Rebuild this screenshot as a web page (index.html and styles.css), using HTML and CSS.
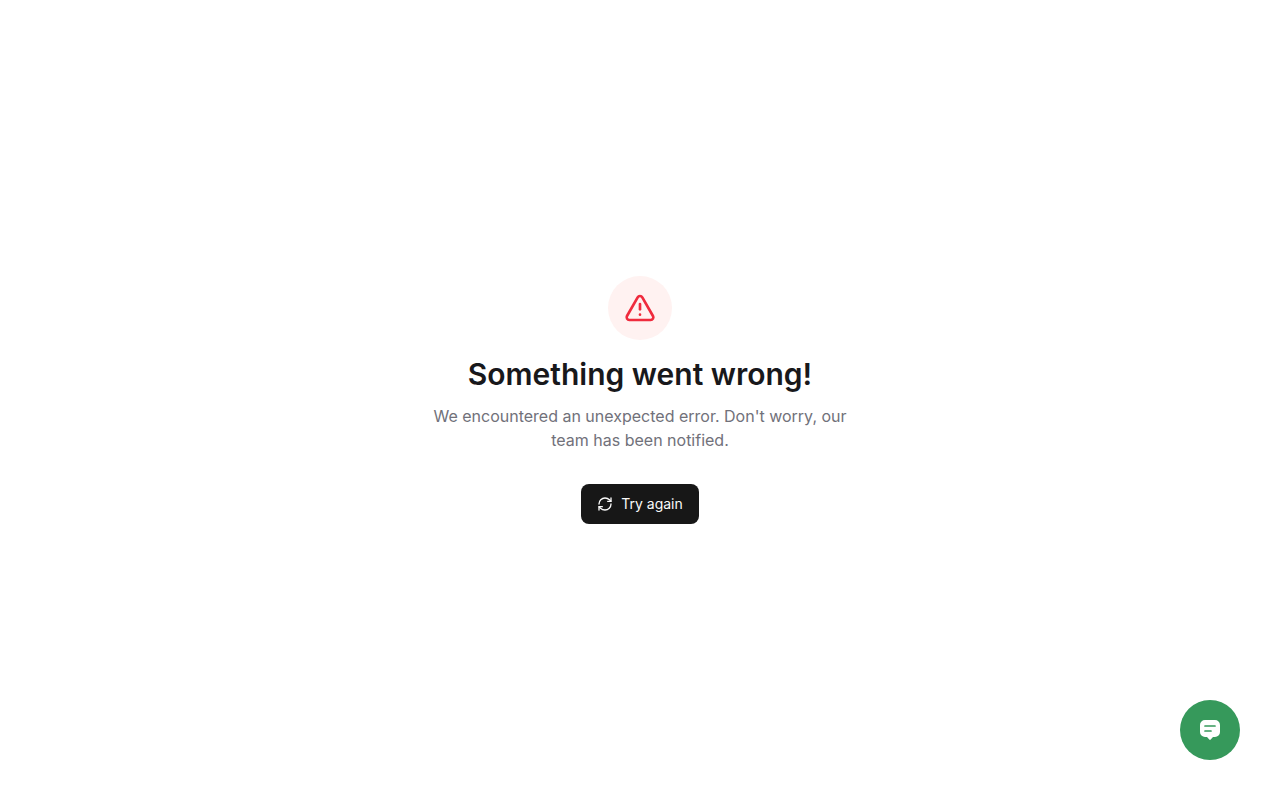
FILE: index.html
```html
<!DOCTYPE html>
<html lang="en">

<head>
    <meta charset="UTF-8">
    <meta name="viewport" content="width=device-width, initial-scale=1.0">
    <title>Something went wrong!</title>
    <link rel="stylesheet" href="styles.css">
</head>

<body>
    <main class="error-page">
        <div class="error-content">
            <div class="error-icon">
                <svg width="32" height="32" viewBox="0 0 24 24" fill="none" stroke="currentColor" stroke-width="2" stroke-linecap="round" stroke-linejoin="round" aria-hidden="true">
                    <path d="m21.73 18-8-14a2 2 0 0 0-3.48 0l-8 14A2 2 0 0 0 4 21h16a2 2 0 0 0 1.73-3" />
                    <path d="M12 9v4" />
                    <path d="M12 17h.01" />
                </svg>
            </div>
            <h1>Something went wrong!</h1>
            <p class="message">We encountered an unexpected error. Don't worry, our team has been notified.</p>
            <button type="button" class="btn" id="retry">
                <svg width="16" height="16" viewBox="0 0 24 24" fill="none" stroke="currentColor" stroke-width="2" stroke-linecap="round" stroke-linejoin="round" aria-hidden="true">
                    <path d="M3 12a9 9 0 0 1 9-9 9.75 9.75 0 0 1 6.74 2.74L21 8" />
                    <path d="M21 3v5h-5" />
                    <path d="M21 12a9 9 0 0 1-9 9 9.75 9.75 0 0 1-6.74-2.74L3 16" />
                    <path d="M8 16H3v5" />
                </svg>
                Try again
            </button>
        </div>
    </main>

    <button type="button" class="chat-button" aria-label="Open chat">
        <svg width="20" height="20" viewBox="0 0 20 20" aria-hidden="true">
            <path fill="#fff" d="M5 0h10a5 5 0 0 1 5 5v7a5 5 0 0 1-5 5h-2l-2.3 2.6a1 1 0 0 1-1.4 0L7 17H5a5 5 0 0 1-5-5V5a5 5 0 0 1 5-5z" />
            <path fill="none" stroke="#36995b" stroke-width="1.7" stroke-linecap="round" d="M5 6h10M5 11h6" />
        </svg>
    </button>

    <script>
        document.getElementById('retry').addEventListener('click', () => location.reload());
    </script>
</body>

</html>
```

FILE: styles.css
```css
body {
    font-family: Inter, sans-serif;
    background-color: #fff;
    margin: 0;
    color: #18181b;
}

.error-page {
    display: flex;
    align-items: center;
    justify-content: center;
    min-height: 100vh;
}

.error-content {
    display: flex;
    flex-direction: column;
    align-items: center;
    max-width: 448px;
    padding: 0 16px;
    box-sizing: border-box;
    text-align: center;
}

.error-icon {
    display: flex;
    align-items: center;
    justify-content: center;
    width: 64px;
    height: 64px;
    border-radius: 50%;
    background-color: #fff2f1;
    color: #ef2b3d;
}

h1 {
    margin: 16px 0 12px;
    font-size: 30px;
    line-height: 36px;
    font-weight: 600;
}

.message {
    margin: 0 0 32px;
    font-size: 16px;
    line-height: 24px;
    color: #71717a;
}

.btn {
    display: flex;
    align-items: center;
    gap: 8px;
    height: 40px;
    padding: 0 16px;
    border: none;
    border-radius: 8px;
    background-color: #171717;
    color: #fafafa;
    font-family: inherit;
    font-size: 14px;
    line-height: 20px;
    cursor: pointer;
}

.btn:hover {
    background-color: #2e2e2e;
}

/* Floating chat launcher */
.chat-button {
    position: fixed;
    right: 40px;
    bottom: 40px;
    display: flex;
    align-items: center;
    justify-content: center;
    width: 60px;
    height: 60px;
    padding: 0;
    border: none;
    border-radius: 50%;
    background-color: #36995b;
    cursor: pointer;
}
```
